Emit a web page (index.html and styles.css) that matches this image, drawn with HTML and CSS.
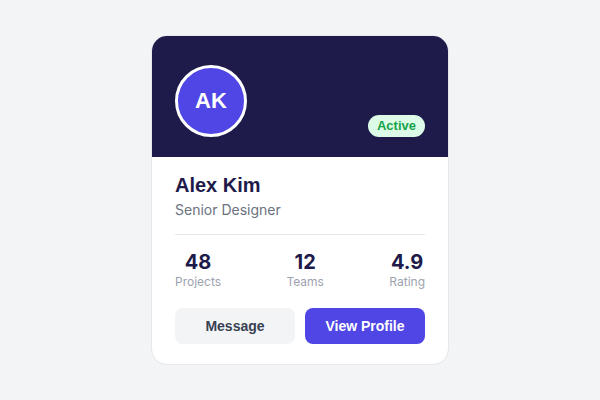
FILE: index.html
```html
<!DOCTYPE html>
<html lang="en">
<head>
<meta charset="utf-8">
<title>Profile Card</title>
<link rel="stylesheet" href="styles.css">
</head>
<body>
<div class="card">
  <div class="card-header">
    <div class="avatar">AK</div>
    <span class="badge">Active</span>
  </div>
  <div class="card-body">
    <h1 class="name">Alex Kim</h1>
    <p class="role">Senior Designer</p>
    <hr class="divider">
    <div class="stats">
      <div class="stat"><div class="stat-value">48</div><div class="stat-label">Projects</div></div>
      <div class="stat"><div class="stat-value">12</div><div class="stat-label">Teams</div></div>
      <div class="stat"><div class="stat-value">4.9</div><div class="stat-label">Rating</div></div>
    </div>
    <div class="actions">
      <button class="btn btn-secondary">Message</button>
      <button class="btn btn-primary">View Profile</button>
    </div>
  </div>
</div>
</body>
</html>
```
FILE: styles.css
```css
* { box-sizing: border-box; }
html, body { margin: 0; padding: 0; }
body {
  width: 600px;
  height: 400px;
  background: #f3f4f6;
  display: flex;
  align-items: center;
  justify-content: center;
  font-family: "Liberation Sans", Arial, sans-serif;
}
.card {
  width: 298px;
  background: #ffffff;
  border: 1px solid #e5e7eb;
  border-radius: 16px;
  overflow: hidden;
}
.card-header {
  height: 121px;
  background: #1e1b4b;
  display: flex;
  align-items: flex-end;
  justify-content: space-between;
  padding: 0 23px 20px 23px;
}
.avatar {
  width: 72px;
  height: 72px;
  border-radius: 50%;
  background: #4f46e5;
  border: 3px solid #ffffff;
  color: #ffffff;
  font-weight: 700;
  font-size: 22px;
  display: flex;
  align-items: center;
  justify-content: center;
}
.badge {
  background: #dcfce7;
  color: #16a34a;
  font-size: 13px;
  font-weight: 700;
  line-height: 16px;
  padding: 3px 9px;
  border-radius: 999px;
}
.card-body {
  padding: 16px 23px 20px 23px;
}
.name {
  margin: 0;
  font-size: 20px;
  line-height: 24px;
  font-weight: 700;
  color: #1e1b4b;
}
.role {
  margin: 3px 0 0;
  font-family: Inter, "Noto Sans", sans-serif;
  font-size: 14px;
  line-height: 20px;
  color: #6b7280;
}
.divider {
  border: 0;
  border-top: 1px solid #e5e7eb;
  margin: 14px 0 0;
}
.stats {
  display: flex;
  justify-content: space-between;
  padding-top: 15px;
  font-family: Inter, "Noto Sans", sans-serif;
}
.stat { text-align: center; }
.stat-value {
  font-size: 20px;
  line-height: 24px;
  font-weight: 700;
  color: #1e1b4b;
}
.stat-label {
  font-size: 12px;
  line-height: 16px;
  color: #9ca3af;
}
.actions {
  display: flex;
  gap: 10px;
  margin-top: 18px;
}
.btn {
  flex: 1;
  height: 36px;
  border: 0;
  border-radius: 8px;
  font-family: "Liberation Sans", Arial, sans-serif;
  font-size: 14px;
  font-weight: 700;
}
.btn-secondary { background: #f3f4f6; color: #374151; }
.btn-primary { background: #4f46e5; color: #ffffff; }
```
